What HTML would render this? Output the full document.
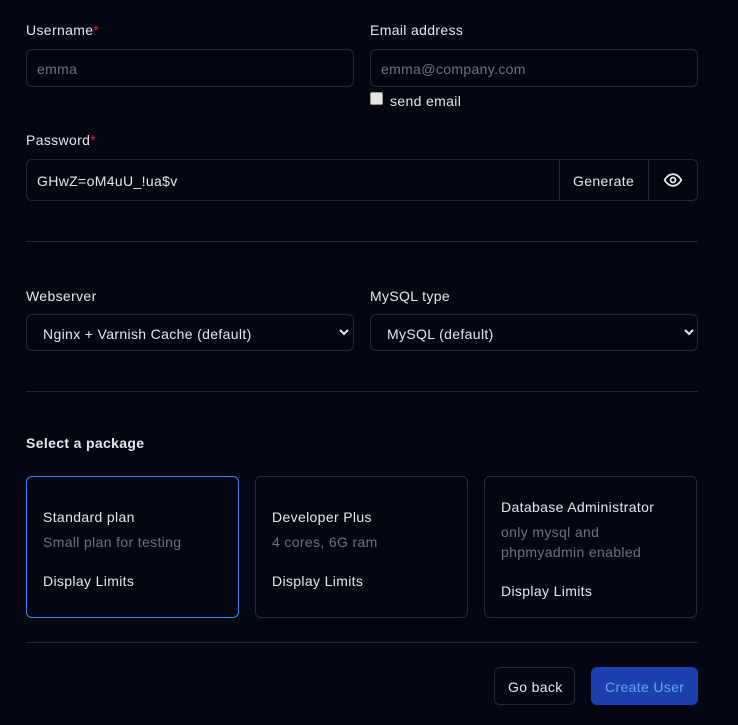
<!DOCTYPE html>
<html><head><meta charset="utf-8"><style>
*{box-sizing:border-box;margin:0;padding:0}
body{width:738px;height:725px;background:#030712;font-family:"Liberation Sans",sans-serif;color:#e5e7eb;position:relative;overflow:hidden;font-size:14px;letter-spacing:0.35px}
.a{position:absolute}
.lbl{font-size:14px;color:#e5e7eb}
.lbl b{color:#dc2626;font-weight:normal}
.box{position:absolute;border:1px solid #1f2937;border-radius:6px;background:#030712}
.ph{color:#6b7280}
.hr{position:absolute;left:26px;width:672px;height:1px;background:#1f2937}
.t{position:absolute;white-space:nowrap;padding-top:1px}
</style></head><body>
<div class="t lbl" style="left:26px;top:21px">Username<b>*</b></div>
<div class="box" style="left:26px;top:49px;width:328px;height:38px"></div>
<div class="t ph" style="left:37px;top:60px">emma</div>
<div class="t lbl" style="left:370px;top:21px">Email address</div>
<div class="box" style="left:370px;top:49px;width:328px;height:38px"></div>
<div class="t ph" style="left:381px;top:60px">emma@company.com</div>
<div class="a" style="left:370px;top:92px;width:13px;height:13px;background:#e5e5e5;border:1px solid #999;border-radius:2px"></div>
<div class="t" style="left:390px;top:92px">send email</div>

<div class="t lbl" style="left:26px;top:131px">Password<b>*</b></div>
<div class="box" style="left:26px;top:159px;width:672px;height:42px"></div>
<div class="t" style="left:37px;top:172px">GHwZ=oM4uU_!ua$v</div>
<div class="a" style="left:559px;top:160px;width:1px;height:40px;background:#1f2937"></div>
<div class="t" style="left:573px;top:172px">Generate</div>
<div class="a" style="left:648px;top:160px;width:1px;height:40px;background:#1f2937"></div>
<svg class="a" style="left:663px;top:170px" width="20" height="20" viewBox="0 0 24 24" fill="none" stroke="#e5e7eb" stroke-width="2.2" stroke-linecap="round" stroke-linejoin="round"><path d="M2 12s3.5-7 10-7 10 7 10 7-3.5 7-10 7S2 12 2 12z"/><circle cx="12" cy="12" r="3"/></svg>

<div class="hr" style="top:241px"></div>

<div class="t lbl" style="left:26px;top:287px">Webserver</div>
<div class="box" style="left:26px;top:314px;width:328px;height:37px"></div>
<div class="t" style="left:43px;top:325px">Nginx + Varnish Cache (default)</div>
<svg class="a" style="left:339px;top:328px" width="10" height="8" viewBox="0 0 10 8" fill="none" stroke="#e5e7eb" stroke-width="2"><path d="M1 2l4 4 4-4"/></svg>
<div class="t lbl" style="left:370px;top:287px">MySQL type</div>
<div class="box" style="left:370px;top:314px;width:328px;height:37px"></div>
<div class="t" style="left:387px;top:325px">MySQL (default)</div>
<svg class="a" style="left:684px;top:328px" width="10" height="8" viewBox="0 0 10 8" fill="none" stroke="#e5e7eb" stroke-width="2"><path d="M1 2l4 4 4-4"/></svg>

<div class="hr" style="top:391px"></div>

<div class="t" style="left:26px;top:434px;font-weight:bold">Select a package</div>

<div class="box" style="left:26px;top:476px;width:213px;height:142px;border-color:#3b82f6"></div>
<div class="t" style="left:43px;top:508px">Standard plan</div>
<div class="t ph" style="left:43px;top:533px">Small plan for testing</div>
<div class="t" style="left:43px;top:572px">Display Limits</div>

<div class="box" style="left:255px;top:476px;width:213px;height:142px"></div>
<div class="t" style="left:272px;top:508px">Developer Plus</div>
<div class="t ph" style="left:272px;top:533px">4 cores, 6G ram</div>
<div class="t" style="left:272px;top:572px">Display Limits</div>

<div class="box" style="left:484px;top:476px;width:213px;height:142px"></div>
<div class="t" style="left:501px;top:498px">Database Administrator</div>
<div class="t ph" style="left:501px;top:523px">only mysql and</div>
<div class="t ph" style="left:501px;top:543px">phpmyadmin enabled</div>
<div class="t" style="left:501px;top:582px">Display Limits</div>

<div class="hr" style="top:642px"></div>

<div class="box" style="left:494px;top:667px;width:81px;height:38px"></div>
<div class="t" style="left:508px;top:678px">Go back</div>
<div class="a" style="left:591px;top:667px;width:107px;height:38px;background:#1e40af;border-radius:6px"></div>
<div class="t" style="left:605px;top:678px;color:#60a5fa">Create User</div>
</body></html>
